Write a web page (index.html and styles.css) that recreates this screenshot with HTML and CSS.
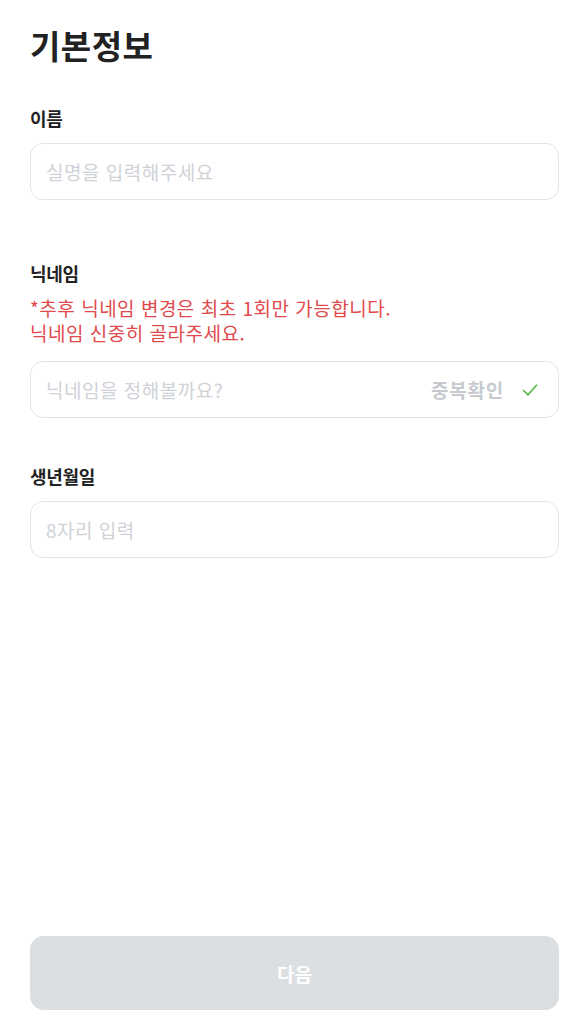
FILE: index.html
```html
<!DOCTYPE html>
<html lang="ko">
<head>
<meta charset="utf-8">
<link rel="stylesheet" href="styles.css">
</head>
<body>
<main class="page">
  <h1 class="title">기본정보</h1>

  <section class="group group-name">
    <label class="label" for="name">이름</label>
    <div class="field">
      <input id="name" class="input" type="text" placeholder="실명을 입력해주세요">
    </div>
  </section>

  <section class="group group-nick">
    <label class="label" for="nick">닉네임</label>
    <p class="warn">*추후 닉네임 변경은 최초 1회만 가능합니다.<br>닉네임 신중히 골라주세요.</p>
    <div class="field">
      <input id="nick" class="input" type="text" placeholder="닉네임을 정해볼까요?">
      <span class="dup">중복확인</span>
      <svg class="check" width="16" height="14" viewBox="0 0 16 14" aria-hidden="true">
        <path d="M1.5 7.5 L6 11.8 L14.5 2.2" fill="none" stroke="#5cb84c" stroke-width="1.7" stroke-linecap="round" stroke-linejoin="round"/>
      </svg>
    </div>
  </section>

  <section class="group group-birth">
    <label class="label" for="birth">생년월일</label>
    <div class="field">
      <input id="birth" class="input" type="text" placeholder="8자리 입력">
    </div>
  </section>

  <button class="next" type="button">다음</button>
</main>
</body>
</html>
```

FILE: styles.css
```css
* { box-sizing: border-box; }

html, body {
  margin: 0;
  padding: 0;
  background: #ffffff;
}

body {
  font-family: "Noto Sans CJK KR", "Noto Sans", "Liberation Sans", sans-serif;
  color: #222222;
}

.page {
  min-height: 1034px;
  display: flex;
  flex-direction: column;
  padding: 0 21px 0 30px;
}

.title {
  margin: 25px 0 0;
  font-size: 33px;
  line-height: 40px;
  font-weight: 700;
  color: #222222;
  letter-spacing: 0.5px;
}

.group {
  display: flex;
  flex-direction: column;
}

.group-name { margin-top: 40px; }
.group-nick { margin-top: 60px; }
.group-birth { margin-top: 45px; }

.label {
  font-size: 18px;
  line-height: 26px;
  font-weight: 700;
  color: #222222;
  letter-spacing: -0.3px;
}

.warn {
  margin: 10px 0 0;
  font-size: 19px;
  line-height: 24.5px;
  color: #e14a4d;
  letter-spacing: 0.5px;
}

.field {
  margin-top: 12px;
  height: 57px;
  border: 1.5px solid #e2e4e7;
  border-radius: 13px;
  display: flex;
  align-items: center;
  padding: 0 20px 0 15px;
}

.group-nick .field { margin-top: 16px; }

.input {
  flex: 1;
  min-width: 0;
  border: none;
  outline: none;
  background: transparent;
  font-family: inherit;
  font-size: 19px;
  color: #222222;
  padding: 0;
  letter-spacing: 0.5px;
}

.input::placeholder {
  color: #cfd2d7;
}

.dup {
  font-size: 19px;
  font-weight: 700;
  color: #c6cacf;
  letter-spacing: 0.8px;
  margin-right: 18px;
}

.check {
  display: block;
  flex: none;
}

.next {
  margin-top: auto;
  margin-bottom: 24px;
  height: 74px;
  width: 100%;
  border: none;
  border-radius: 14px;
  background: #dcdfe2;
  color: #ffffff;
  font-family: inherit;
  font-size: 19px;
  font-weight: 700;
}
```
